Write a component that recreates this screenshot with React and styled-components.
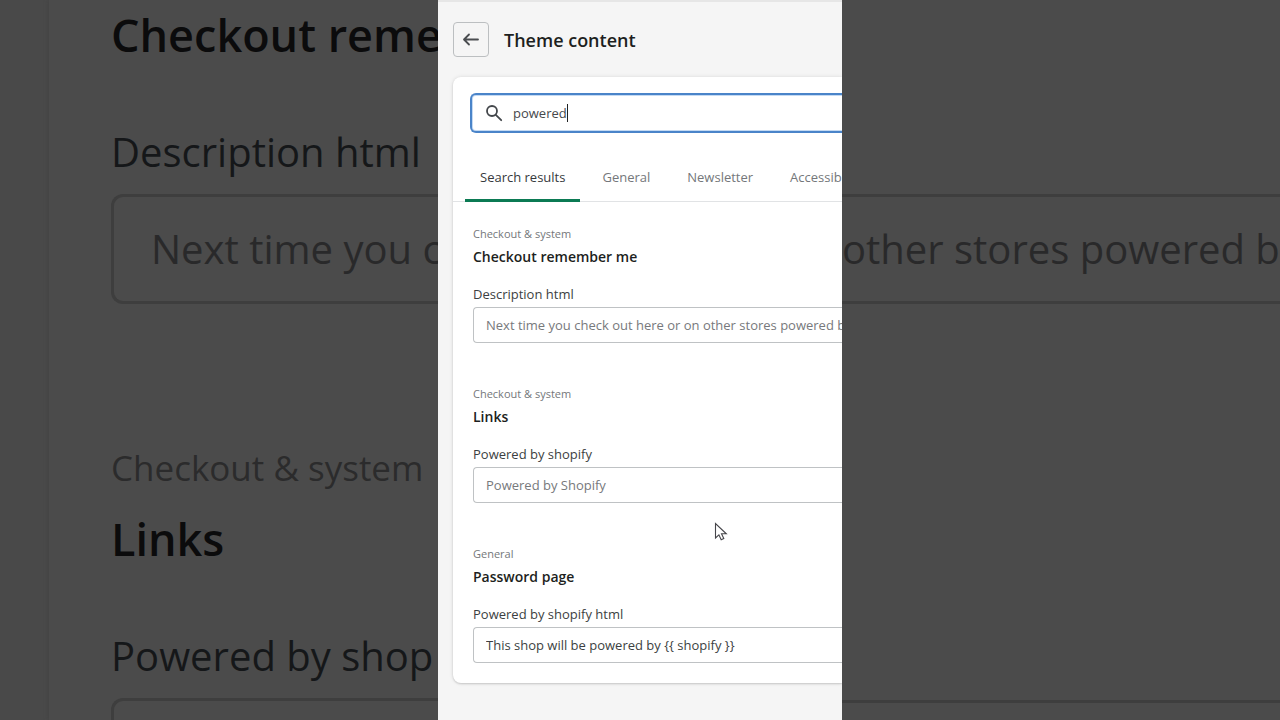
import { useState } from 'react';
import styled, { createGlobalStyle } from 'styled-components';

const tabs = ['Search results', 'General', 'Newsletter', 'Accessibility'];

const results = [
  {
    id: 'remember_me',
    group: 'Checkout & system',
    title: 'Checkout remember me',
    label: 'Description html',
    placeholder: 'Next time you check out here or on other stores powered by Shopify',
  },
  {
    id: 'links',
    group: 'Checkout & system',
    title: 'Links',
    label: 'Powered by shopify',
    placeholder: 'Powered by Shopify',
  },
  {
    id: 'password_page',
    group: 'General',
    title: 'Password page',
    label: 'Powered by shopify html',
    value: 'This shop will be powered by {{ shopify }}',
  },
];

const BackIcon = () => (
  <svg width="20" height="20" viewBox="0 0 20 20" fill="none" stroke="#4a4d50" strokeWidth="1.8" strokeLinecap="round" strokeLinejoin="round">
    <path d="M17 9.5H3.2M8 4.5l-5 5 5 5" />
  </svg>
);

const SearchIcon = () => (
  <svg width="20" height="20" viewBox="0 0 20 20" fill="none" stroke="#43474b" strokeWidth="1.8" strokeLinecap="round">
    <circle cx="8" cy="8" r="5" />
    <path d="M11.8 11.8L17.2 17.2" />
  </svg>
);

const Pointer = () => (
  <PointerIcon width="14" height="20" viewBox="0 0 14 20" aria-hidden="true">
    <path d="M1.5 1.5V16l3.4-3.2 2.3 5 2.6-1.2-2.3-4.8h4.8z" fill="#fff" stroke="#45454a" strokeWidth="1.1" />
  </PointerIcon>
);

const App = () => {
  const [query, setQuery] = useState('powered');
  const [active, setActive] = useState(tabs[0]);

  return (
    <Stage>
      <GlobalStyle />
      <Backdrop>
        <BackdropCard>
          <BackdropTitle>Checkout reme</BackdropTitle>
          <BackdropLabel>Description html</BackdropLabel>
          <BackdropField>Next time you c</BackdropField>
          <BackdropGroup>Checkout &amp; system</BackdropGroup>
          <BackdropTitle>Links</BackdropTitle>
          <BackdropLabel>Powered by shop</BackdropLabel>
          <BackdropField />
        </BackdropCard>
      </Backdrop>

      <Screen>
        <Header>
          <BackButton type="button" aria-label="Back">
            <BackIcon />
          </BackButton>
          <PageTitle>Theme content</PageTitle>
        </Header>
        <Card>
          <SearchBox>
            <SearchIcon />
            <SearchInput aria-label="Search" value={query} onChange={(e) => setQuery(e.target.value)} />
            <Caret />
          </SearchBox>
          <Tabs role="tablist">
            {tabs.map((tab) => (
              <Tab key={tab} type="button" role="tab" aria-selected={active === tab} $active={active === tab} onClick={() => setActive(tab)}>
                {tab}
              </Tab>
            ))}
          </Tabs>
          <Results>
            {results.map((item) => (
              <Result key={item.id}>
                <Group>{item.group}</Group>
                <ResultTitle>{item.title}</ResultTitle>
                <Label htmlFor={item.id}>{item.label}</Label>
                <Field id={item.id} placeholder={item.placeholder} defaultValue={item.value} />
              </Result>
            ))}
          </Results>
        </Card>
        <Pointer />
      </Screen>

      <Backdrop>
        <BackdropCard $continued>
          <BackdropField $continued>other stores powered b</BackdropField>
          <BackdropField $continued />
        </BackdropCard>
      </Backdrop>
    </Stage>
  );
};

const GlobalStyle = createGlobalStyle`
  * {
    box-sizing: border-box;
  }
  body {
    margin: 0;
    background: #494949;
  }
  body, button, input {
    font-family: "Segoe UI", "Open Sans", "Noto Sans", sans-serif;
  }
`;

const Stage = styled.div`
  display: grid;
  grid-template-columns: minmax(0, 1fr) 404px minmax(0, 1fr);
  height: 100vh;
  min-height: 700px;
  overflow: hidden;
`;

const Backdrop = styled.aside`
  display: flex;
  overflow: hidden;
  background: #494949;
`;

const BackdropCard = styled.div`
  flex: 1;
  min-width: 0;
  margin-left: ${(props) => (props.$continued ? '0' : '49px')};
  padding: ${(props) => (props.$continued ? '194px 0 0' : '0 0 0 62px')};
  background: #4b4b4b;
  box-shadow: 0 0 4px #414141;
  white-space: nowrap;
`;

const BackdropTitle = styled.div`
  color: #0b0b0c;
  font-size: 45px;
  font-weight: 600;
  line-height: 70px;
`;

const BackdropLabel = styled.div`
  margin-top: 46px;
  color: #151719;
  font-size: 40px;
  line-height: 72px;
`;

const BackdropField = styled.div`
  height: 110px;
  margin: ${(props) => (props.$continued ? '0 0 396px' : '6px 0 128px')};
  padding-left: ${(props) => (props.$continued ? '0' : '37px')};
  border: 3px solid #3e3e3e;
  border-right: 0;
  border-left-width: ${(props) => (props.$continued ? '0' : '3px')};
  border-radius: ${(props) => (props.$continued ? '0' : '12px 0 0 12px')};
  color: #29292a;
  font-size: 40px;
  line-height: 104px;
`;

const BackdropGroup = styled.div`
  color: #2b2b2c;
  font-size: 35px;
  line-height: 72px;
`;

const Screen = styled.main`
  position: relative;
  overflow: hidden;
  padding-left: 15px;
  border-top: 2px solid #e6e6e6;
  background: #f5f5f5;
`;

const Header = styled.header`
  display: flex;
  align-items: center;
  gap: 15px;
  padding: 20px 0;
`;

const BackButton = styled.button`
  display: flex;
  align-items: center;
  justify-content: center;
  width: 36px;
  height: 35px;
  padding: 0;
  border: 1px solid #bcbfc1;
  border-radius: 4px;
  background: transparent;
  cursor: pointer;
`;

const PageTitle = styled.h1`
  margin: 0;
  color: #1d1f21;
  font-size: 18px;
  font-weight: 600;
  line-height: 28px;
`;

const Card = styled.section`
  padding: 16px 0 20px;
  border-radius: 8px 0 0 8px;
  background: #fff;
  box-shadow: 0 0 4px rgba(23, 24, 24, 0.1), 0 1px 2px rgba(0, 0, 0, 0.15);
`;

const SearchBox = styled.div`
  display: flex;
  align-items: center;
  height: 40px;
  margin-left: 17px;
  padding-left: 12px;
  border: 2px solid #4a84c9;
  border-right: 0;
  border-radius: 6px 0 0 6px;
  box-shadow: inset 1px 0 #c4daf3, inset 0 1px #c4daf3, inset 0 -1px #c4daf3;
`;

const SearchInput = styled.input`
  field-sizing: content;
  margin-left: 9px;
  padding: 0;
  border: none;
  outline: none;
  background: transparent;
  caret-color: transparent;
  color: #46494c;
  font-size: 13px;
  line-height: 20px;
`;

const Caret = styled.span`
  width: 1px;
  height: 18px;
  background: #202223;
`;

const Tabs = styled.div`
  display: flex;
  gap: 7px;
  margin-top: 20px;
  padding-left: 12px;
  border-bottom: 1px solid #e1e3e5;
`;

const Tab = styled.button`
  flex: none;
  height: 49px;
  margin-bottom: -1px;
  padding: 2px 15px 0;
  border: none;
  border-bottom: 3px solid ${(props) => (props.$active ? '#0b7a53' : 'transparent')};
  border-radius: 2px 2px 0 0;
  background: transparent;
  color: ${(props) => (props.$active ? '#36393c' : '#74777a')};
  font-size: 13px;
  cursor: pointer;
`;

const Results = styled.div`
  display: flex;
  flex-direction: column;
  gap: 41px;
  padding: 22px 0 0 20px;
`;

const Result = styled.div`
  display: flex;
  flex-direction: column;
`;

const Group = styled.span`
  color: #74777a;
  font-size: 11px;
  line-height: 20px;
`;

const ResultTitle = styled.h2`
  margin: 0 0 14px;
  color: #1d1f21;
  font-size: 14px;
  font-weight: 600;
  line-height: 26px;
`;

const Label = styled.label`
  margin-bottom: 3px;
  color: #3c3f42;
  font-size: 13px;
  line-height: 20px;
`;

const Field = styled.input`
  width: 100%;
  height: 36px;
  padding: 0 0 0 12px;
  border: 1px solid #bfc2c4;
  border-right: 0;
  border-radius: 4px 0 0 4px;
  outline: none;
  background: #fff;
  color: #3c3f42;
  font-size: 13px;
  &::placeholder {
    color: #77797c;
    opacity: 1;
  }
`;

const PointerIcon = styled.svg`
  position: absolute;
  top: 520px;
  left: 276px;
`;

export default App;
